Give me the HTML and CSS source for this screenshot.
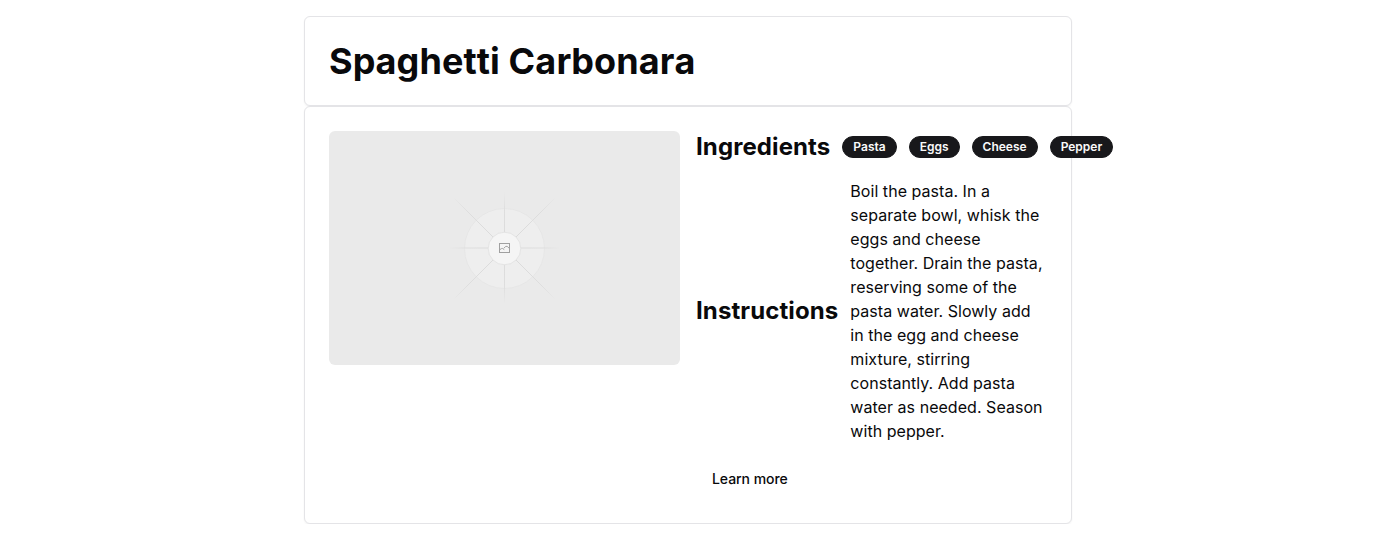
FILE: index.html
```
<!DOCTYPE html>
<html lang="en">
<head>
<meta charset="utf-8">
<title>Spaghetti Carbonara</title>
<link rel="stylesheet" href="styles.css">
</head>
<body>
<main class="page">
  <header class="card">
    <h1 class="title">Spaghetti Carbonara</h1>
  </header>
  <section class="card recipe">
    <svg class="photo" viewBox="0 0 351 234" role="img" aria-label="Recipe photo">
      <defs>
        <radialGradient id="axis" gradientUnits="userSpaceOnUse" cx="175.5" cy="117" r="56">
          <stop offset="0" stop-color="#dadada"/>
          <stop offset=".7" stop-color="#dedede"/>
          <stop offset="1" stop-color="#eaeaea"/>
        </radialGradient>
        <radialGradient id="diagonal" gradientUnits="userSpaceOnUse" cx="175.5" cy="117" r="74">
          <stop offset="0" stop-color="#dadada"/>
          <stop offset=".7" stop-color="#dedede"/>
          <stop offset="1" stop-color="#eaeaea"/>
        </radialGradient>
      </defs>
      <rect width="351" height="234" fill="#eaeaea"/>
      <circle cx="175.5" cy="117.5" r="40" fill="#eeeeee" stroke="#e6e6e6"/>
      <path d="M175.5 60v114M118 117.01h115" stroke="url(#axis)" fill="none"/>
      <path d="M125.5 67.5l100 100M225.5 67.5l-100 100" stroke="url(#diagonal)" fill="none"/>
      <circle cx="175.5" cy="117.5" r="16.3" fill="#f5f5f5" stroke="#e0e0e0" stroke-width=".8"/>
      <g fill="none" stroke="#a0a0a0" stroke-width="1">
        <rect x="170.5" y="112.5" width="10" height="9"/>
        <path d="M170.5 118.8l2.2-1.3h1l1.6 1.2M174.8 117.2l2-1.8h1.4l2.3 2.1"/>
      </g>
    </svg>
    <div class="details">
      <div class="row">
        <h2 class="heading">Ingredients</h2>
        <span class="badge">Pasta</span>
        <span class="badge">Eggs</span>
        <span class="badge">Cheese</span>
        <span class="badge">Pepper</span>
      </div>
      <div class="row">
        <h2 class="heading">Instructions</h2>
        <p class="text">Boil the pasta. In a separate bowl, whisk the eggs and cheese together. Drain the pasta, reserving some of the pasta water. Slowly add in the egg and cheese mixture, stirring constantly. Add pasta water as needed. Season with pepper.</p>
      </div>
      <button class="button" type="button">Learn more</button>
    </div>
  </section>
</main>
</body>
</html>
```
FILE: styles.css
```
* { box-sizing: border-box; }
body {
  margin: 0;
  background: #fff;
  color: #09090b;
  font: 16px/24px Inter, sans-serif;
}
h1, h2, p { margin: 0; }
.page { width: 768px; margin: 16px auto 0; }
.card {
  padding: 24px;
  border: 1px solid #e4e4e7;
  border-radius: 6px;
  background: #fff;
  box-shadow: 0 1px 2px rgba(0, 0, 0, .05);
}
.title { font-size: 36px; line-height: 40px; font-weight: 700; font-kerning: none; letter-spacing: .12px; }
.recipe {
  display: grid;
  grid-template-columns: repeat(2, minmax(0, 1fr));
  gap: 16px;
  align-items: start;
}
.photo { display: block; width: 100%; height: auto; border-radius: 6px; }
.details { display: flex; flex-direction: column; align-items: flex-start; gap: 16px; }
.row { display: flex; align-items: center; gap: 12px; max-width: 100%; }
.heading { font-size: 24px; line-height: 32px; font-weight: 700; letter-spacing: .1px; }
.text { letter-spacing: .04px; }
.badge {
  flex: none;
  padding: 2px 10px;
  border: 1px solid #18181b;
  border-radius: 999px;
  background: #18181b;
  color: #fafafa;
  font-size: 12px;
  line-height: 16px;
  font-weight: 600;
}
.button {
  height: 40px;
  padding: 8px 16px;
  border: 0;
  border-radius: 6px;
  background: transparent;
  color: #09090b;
  font: 500 14px/20px Inter, sans-serif;
  letter-spacing: -.05px;
}
```
